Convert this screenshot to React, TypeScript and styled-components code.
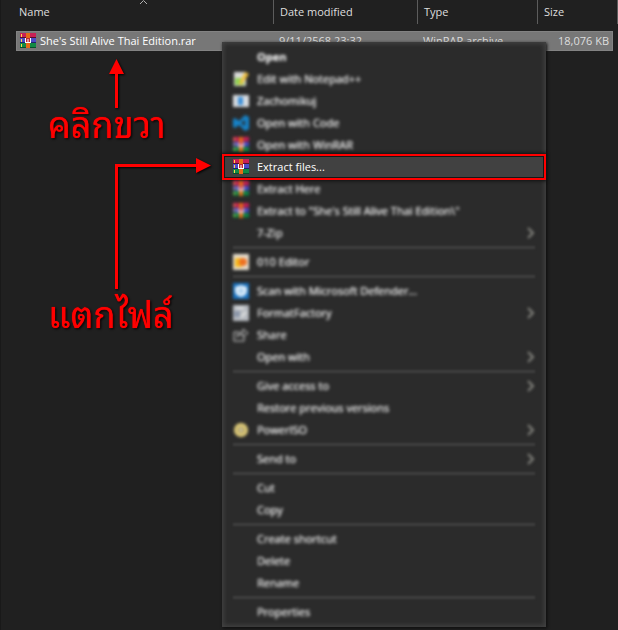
import React from "react";
import styled, { createGlobalStyle, css } from "styled-components";

const Global = createGlobalStyle`
  * { box-sizing: border-box; }
  body { margin: 0; background: #202020; color: #dedede; font: 11px/16px "Open Sans", "Noto Sans", sans-serif; }
`;

const Explorer = styled.main`
  position: relative;
  min-height: 100vh;
  overflow: hidden;
  border-left: 1px solid #191919;
  background: #202020;
`;

const FileTable = styled.table`
  display: block;
  width: 100%;
`;
const TableSection = styled.thead`
  display: block;
`;
const TableBody = styled.tbody`
  display: block;
  padding: 7px 5px 0 15px;
`;
const HeaderRow = styled.tr`
  display: grid;
  grid-template-columns: minmax(0, 1fr) 144px 120px 80px;
  height: 24px;
`;
const FileRow = styled.tr`
  display: grid;
  grid-template-columns: minmax(0, 1fr) 144px 120px 76px;
  align-items: center;
  height: 20px;
  border: 1px solid #838383;
  background: #777777;
`;
const HeaderCell = styled.th<{ $first?: boolean }>`
  position: relative;
  padding: ${(p) => (p.$first ? "4px 18px" : "4px 6px")};
  border-right: 1px solid #5c5c5c;
  font-weight: 400;
  text-align: left;
`;
const SortMark = styled.svg`
  position: absolute;
  top: 0;
  left: 138px;
`;
const Cell = styled.td<{ $end?: boolean }>`
  padding: 0 3px 0 7px;
  text-align: ${(p) => (p.$end ? "right" : "left")};
  white-space: nowrap;
`;
const FileCell = styled(Cell)`
  display: flex;
  align-items: center;
  gap: 4px;
  padding: 0 3px;
  color: #ffffff;
`;

const Menu = styled.div`
  position: absolute;
  top: 42px;
  left: 221px;
  width: 324px;
  padding: 4px 0;
  background: #2b2b2b;
  box-shadow: inset 0 0 4px 2px #414141, 1px 1px 3px #0c0c0c;
`;
const Separator = styled.hr`
  height: 3px;
  margin: 2px 11px;
  border: 0;
  background: #3f3f3f;
  filter: blur(1px);
`;
const MenuItem = styled.button<{ $active?: boolean; $bold?: boolean }>`
  display: grid;
  grid-template-columns: 16px minmax(0, 1fr) 8px;
  align-items: center;
  column-gap: 8px;
  width: 100%;
  height: 22px;
  padding: 0 11px;
  border: 0;
  background: transparent;
  color: #e8e8e8;
  font: inherit;
  font-weight: ${(p) => (p.$bold ? 700 : 400)};
  text-align: left;
  white-space: nowrap;
  ${(p) =>
    p.$active
      ? css`
          position: relative;
          background: #414141;
          color: #ffffff;
          outline: 2px solid #ff0000;
          box-shadow: inset 0 0 0 1px #171717, 0 0 3px 3px #101010;
        `
      : css`
          > * {
            filter: blur(1px) blur(1px);
          }
          > span {
            color: #e4e4e4;
            text-shadow: 0 0 1px #e4e4e4;
          }
        `}
`;
const ActiveFrame = styled.div`
  display: grid;
  padding: 0 2px;
  ${MenuItem} {
    padding: 0 9px;
  }
`;

const Notes = styled.aside`
  position: absolute;
  top: 59px;
  left: 47px;
  display: grid;
  justify-items: start;
  filter: drop-shadow(1px 1px 1px #000000);
`;
const Arrow = styled.svg`
  display: block;
  margin-left: 60px;
`;
const Note = styled.p`
  margin: 0 0 22px;
  color: #ff0000;
  font: 36px/28px "Noto Sans Thai Looped", "Noto Looped Thai", "Loma", "Garuda", "Waree", "Open Sans", sans-serif;
  text-shadow: 0 0 1px #ff0000;
  white-space: nowrap;
`;

type Glyph = "rar" | "note" | "window" | "code" | "hex" | "shield" | "format" | "share" | "disc";

const Rar = () => (
  <>
    <path fill="#c92055" d="M0 0h16v5H0z" />
    <path fill="#4c4cc8" d="M0 5h16v5H0z" />
    <path fill="#118a45" d="M0 10h16v5H0z" />
    <path fill="#571029" d="M0 4h16v1H0z" />
    <path fill="#20206c" d="M0 9h16v1H0z" />
    <path fill="#07502c" d="M0 14h16v1H0z" />
    <path fill="#ffd84d" d="M1 1h1v3H1zM1 6h1v3H1zM1 11h1v3H1z" />
    <path fill="#e56b17" d="M6 0h4v15H6z" />
    <path fill="#fff" d="M5 5h1v4h4V5h1v5H5z" />
    <path fill="#bf2838" d="M6 5h4v4H6z" />
    <path fill="#fff" d="M7.500 6h1v3h-1z" />
  </>
);

const glyphs: Record<Glyph, React.ReactNode> = {
  rar: <Rar />,
  note: (
    <>
      <path fill="#dcdcdc" d="M1 1h12v14H1z" />
      <path fill="#8fd14f" d="M2 7h9v7H2z" />
      <path fill="#f0c040" d="M12 1l4 2-7 10-3 1 1-4z" />
    </>
  ),
  window: (
    <>
      <path fill="#d9dde2" d="M0 2h16v12H0z" />
      <path fill="#3a8fd8" d="M5 4h5v8H5z" />
    </>
  ),
  code: <path fill="#1683c9" fillRule="evenodd" d="M12 0l4 2v12l-4 2-6-6-4 3-2-1V4l2-1 4 3zM12 5L8 8l4 3z" />,
  hex: (
    <>
      <path fill="#e8e0d0" d="M0 0h16v16H0z" />
      <path fill="#f5b81c" d="M2 4h7v9H2z" />
      <circle cx="10" cy="8" r="4" fill="#ed7020" />
    </>
  ),
  shield: (
    <>
      <path fill="#1874c4" d="M0 0h16v16H0z" />
      <path fill="#e8f3fc" d="M8 2l6 2v4q0 4-6 6-6-2-6-6V4z" />
      <path stroke="#6eafe0" d="M8 4v8M4 8h8" />
    </>
  ),
  format: (
    <>
      <path fill="#b8bcc2" d="M0 0h16v16H0z" />
      <path fill="#8a95a8" d="M1 6h6v6H1z" />
      <path stroke="#e4e4e4" strokeWidth="2" d="M3 3h8M8 12l5-5" />
    </>
  ),
  share: <path fill="none" stroke="#d8d8d8" d="M6 5H1v9h10v-4M4 10q1-5 6-5V2l5 4-5 4V7q-4 0-6 3z" />,
  disc: (
    <>
      <circle cx="8" cy="8" r="7" fill="#e2cf7c" />
      <circle cx="8" cy="8" r="3" fill="#eee9c9" stroke="#857331" />
      <path stroke="#857331" d="M6 8h4" />
    </>
  ),
};

const Icon = ({ name }: { name?: Glyph }) => (
  <svg width="16" height="16" viewBox="0 0 16 16" aria-hidden="true">
    {name && glyphs[name]}
  </svg>
);

const Chevron = () => (
  <svg width="8" height="12" viewBox="0 0 8 12" fill="none" stroke="#a8a8a0" strokeWidth="1.500" aria-hidden="true">
    <path d="M1 1l5 5-5 5" />
  </svg>
);

type Entry = { label: string; icon?: Glyph; more?: boolean; bold?: boolean; active?: boolean };

const groups: Entry[][] = [
  [
    { label: "Open", bold: true },
    { label: "Edit with Notepad++", icon: "note" },
    { label: "Zachomikuj", icon: "window" },
    { label: "Open with Code", icon: "code" },
    { label: "Open with WinRAR", icon: "rar" },
    { label: "Extract files...", icon: "rar", active: true },
    { label: "Extract Here", icon: "rar" },
    { label: 'Extract to "She\'s Still Alive Thai Edition\\"', icon: "rar" },
    { label: "7-Zip", more: true },
  ],
  [{ label: "010 Editor", icon: "hex" }],
  [
    { label: "Scan with Microsoft Defender...", icon: "shield" },
    { label: "FormatFactory", icon: "format", more: true },
    { label: "Share", icon: "share" },
    { label: "Open with", more: true },
  ],
  [
    { label: "Give access to", more: true },
    { label: "Restore previous versions" },
    { label: "PowerISO", icon: "disc", more: true },
  ],
  [{ label: "Send to", more: true }],
  [{ label: "Cut" }, { label: "Copy" }],
  [{ label: "Create shortcut" }, { label: "Delete" }, { label: "Rename" }],
  [{ label: "Properties" }],
];

const Item = ({ entry }: { entry: Entry }) => {
  const button = (
    <MenuItem type="button" role="menuitem" $active={entry.active} $bold={entry.bold}>
      <Icon name={entry.icon} />
      <span>{entry.label}</span>
      {entry.more && <Chevron />}
    </MenuItem>
  );
  return entry.active ? <ActiveFrame role="none">{button}</ActiveFrame> : button;
};

export default function App() {
  return (
    <Explorer>
      <Global />
      <FileTable>
        <TableSection>
          <HeaderRow>
            <HeaderCell $first>
              Name
              <SortMark width="9" height="5" fill="none" stroke="#b0b0b0" aria-hidden="true">
                <path d="M1 4l3.500-3.500L8 4" />
              </SortMark>
            </HeaderCell>
            <HeaderCell>Date modified</HeaderCell>
            <HeaderCell>Type</HeaderCell>
            <HeaderCell>Size</HeaderCell>
          </HeaderRow>
        </TableSection>
        <TableBody>
          <FileRow>
            <FileCell>
              <Icon name="rar" />
              She's Still Alive Thai Edition.rar
            </FileCell>
            <Cell>9/11/2568 23:32</Cell>
            <Cell>WinRAR archive</Cell>
            <Cell $end>18,076 KB</Cell>
          </FileRow>
        </TableBody>
      </FileTable>

      <Menu role="menu">
        {groups.map((group, index) => (
          <React.Fragment key={index}>
            {index > 0 && <Separator />}
            {group.map((entry) => (
              <Item key={entry.label} entry={entry} />
            ))}
          </React.Fragment>
        ))}
      </Menu>

      <Notes>
        <Arrow width="18" height="49" fill="#ff0000" aria-hidden="true">
          <path d="M8.500 0l7.500 15h-6v34H7V15H1z" />
        </Arrow>
        <Note>คลิกขวา</Note>
        <Arrow width="106" height="140" fill="#ff0000" aria-hidden="true">
          <path d="M7 131V6h81V0l15 7.500L88 15V9H10v122z" />
        </Arrow>
        <Note>แตกไฟล์</Note>
      </Notes>
    </Explorer>
  );
}
